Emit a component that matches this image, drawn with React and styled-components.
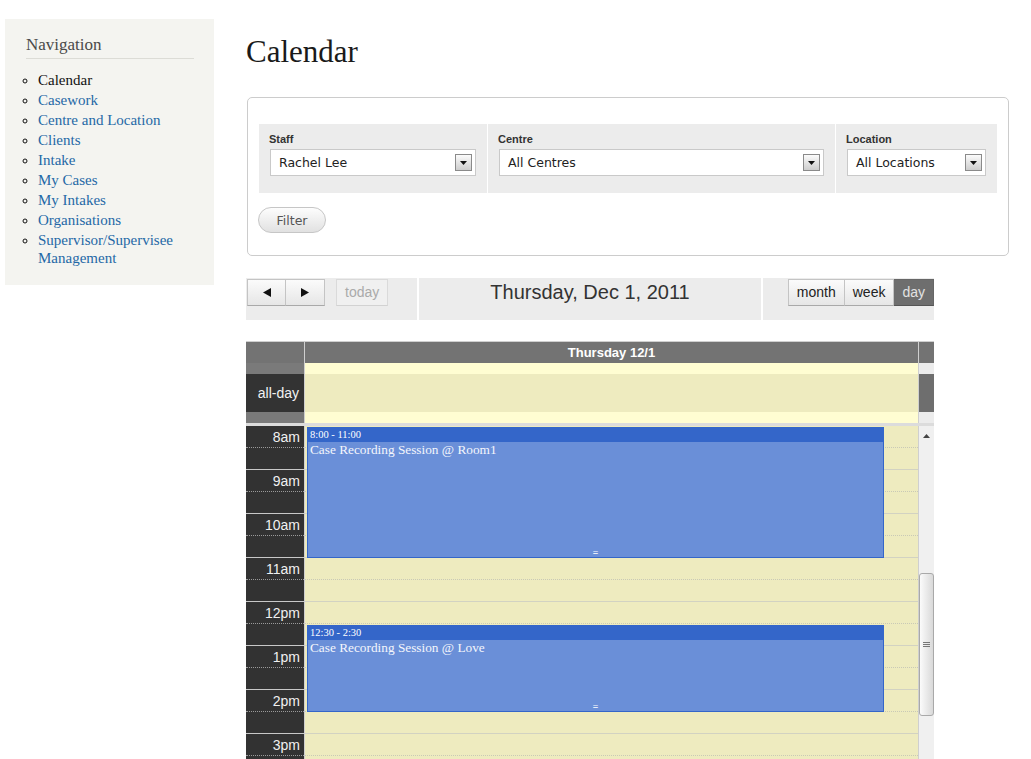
import React from 'react';
import styled, { createGlobalStyle } from 'styled-components';

const GlobalStyle = createGlobalStyle`
  html, body { margin: 0; padding: 0; background: #fff; overflow: hidden; }
  body { font-family: "Liberation Serif", "Times New Roman", serif; color: #222; }
  *, *::before, *::after { box-sizing: border-box; }
`;

const SANS = `"Liberation Sans", Arial, sans-serif`;
const UI = `"DejaVu Sans", Tahoma, sans-serif`;
const SERIF = `"Liberation Serif", "Times New Roman", serif`;

const Page = styled.div`
  display: flex;
  align-items: flex-start;
  padding: 19px 0 0 5px;
`;

/* ---------- Sidebar ---------- */
const Sidebar = styled.nav`
  width: 209px;
  flex: none;
  background: #f4f4f0;
  padding: 15px 20px 16px 21px;
`;
const NavHeading = styled.h2`
  margin: 0;
  font-family: ${SERIF};
  font-size: 17px;
  font-weight: normal;
  line-height: 22px;
  color: #4a4a4a;
  padding-bottom: 2px;
  border-bottom: 1px solid #dcdcd6;
`;
const NavList = styled.ul`
  margin: 12px 0 0;
  padding: 0 0 0 12px;
  list-style: circle;
`;
const NavItem = styled.li`
  font-size: 15px;
  line-height: 18px;
  margin-bottom: 2px;
  color: #111;
`;
const NavLink = styled.a`
  color: ${p => (p.$active ? '#111' : '#2468a6')};
  text-decoration: none;
`;

/* ---------- Main ---------- */
const Main = styled.main`
  margin-left: 32px;
  width: 763px;
  flex: none;
`;
const Title = styled.h1`
  margin: 15px 0 27px;
  font-family: ${SERIF};
  font-size: 31px;
  line-height: 36px;
  font-weight: normal;
  color: #1a1a1a;
`;

/* ---------- Filter ---------- */
const FilterBox = styled.form`
  margin-left: 1px;
  border: 1px solid #cccccc;
  border-radius: 5px;
  padding: 26px 11px 22px;
`;
const FilterRow = styled.div`
  display: flex;
  gap: 1px;
`;
const FilterCell = styled.div`
  width: ${p => p.$w}px;
  flex: none;
  background: #ececec;
  padding: 7px 11px 17px 10px;
`;
const FieldLabel = styled.label`
  display: block;
  font: bold 11px/16px ${SANS};
  color: #333;
  margin-bottom: 2px;
`;
const SelectBox = styled.div`
  margin-left: 1px;
  height: 27px;
  background: #fff;
  border: 1px solid #c9c9c9;
  display: flex;
  align-items: center;
  justify-content: space-between;
  padding: 0 3px 0 8px;
  font: 12.5px ${UI};
  color: #222;
`;
const SelectArrow = styled.span`
  width: 17px;
  height: 17px;
  border: 1px solid #8a8a8a;
  background: linear-gradient(#fbfbfb, #cdcdcd);
  display: flex;
  align-items: center;
  justify-content: center;
`;
const FilterButton = styled.button`
  display: block;
  margin: 14px 0 0 -1px;
  width: 68px;
  height: 26px;
  padding: 0;
  border: 1px solid #c6c6c6;
  border-radius: 13px;
  background: linear-gradient(#fdfdfd, #e1e1e1);
  font: 12.5px ${UI};
  color: #555;
`;

/* ---------- Toolbar ---------- */
const Toolbar = styled.div`
  margin-top: 22px;
  width: 688px;
  height: 42px;
  display: grid;
  grid-template-columns: 171px 1fr 171px;
  column-gap: 2px;
`;
const ToolSection = styled.div`
  background: #ececec;
  padding-top: 1px;
  display: flex;
  align-items: flex-start;
  justify-content: ${p => p.$align || 'flex-start'};
`;
const ButtonGroup = styled.div`
  display: flex;
  margin-left: ${p => p.$ml || 0}px;
`;
const ToolButton = styled.button`
  height: 27px;
  min-width: ${p => p.$w || 0}px;
  padding: 0 8px;
  margin: 0;
  border: 1px solid ${p => (p.$active ? '#666' : p.$disabled ? '#dadada' : '#c4c4c4')};
  border-bottom-color: ${p => (p.$active ? '#555' : p.$disabled ? '#d2d2d2' : '#a9a9a9')};
  & + & { border-left: none; }
  background: ${p =>
    p.$active ? '#6e6e6e' : p.$disabled ? '#f0f0f0' : 'linear-gradient(#fbfbfb, #e6e6e6)'};
  color: ${p => (p.$active ? '#e2e2e2' : p.$disabled ? '#aaa' : '#222')};
  font: 14px/25px ${SANS};
  display: flex;
  align-items: center;
  justify-content: center;
`;
const ToolTitle = styled.h2`
  margin: 0;
  width: 100%;
  text-align: center;
  font: 20px/27px ${SANS};
  font-weight: normal;
  color: #333;
`;

/* ---------- Calendar ---------- */
const Calendar = styled.div`
  margin-top: 21px;
  width: 688px;
  border-top: 1px solid #cfcfcf;
`;
const CalRow = styled.div`
  display: grid;
  grid-template-columns: 58px 613px 15px;
  column-gap: 1px;
  background: #cfcfcf;
  height: ${p => p.$h}px;
  overflow: hidden;
`;
const HeadCell = styled.div`
  background: #737373;
  color: #fff;
  font: bold 13px/21px ${SANS};
  text-align: center;
`;
const Bands = styled.div`
  display: grid;
  grid-template-rows: 11px 1fr 11px;
`;
const Band = styled.div`
  background: ${p => p.$bg};
  color: #f2f2f2;
  font: 14px ${SANS};
  display: flex;
  align-items: center;
  justify-content: flex-end;
  padding-right: 5px;
`;
const Divider = styled.div`
  height: 3px;
  background: #dcdcdc;
`;
const SlotColumn = styled.div`
  position: relative;
  background: ${p => p.$bg};
`;
const HalfSlot = styled.div`
  height: 22px;
  border-bottom: 1px ${p => (p.$half ? 'dotted' : 'solid')} ${p => p.$line};
  color: #f0f0f0;
  font: 14px/22px ${SANS};
  text-align: right;
  padding-right: 4px;
`;
const Event = styled.div`
  position: absolute;
  left: 2px;
  right: 34px;
  top: ${p => p.$top}px;
  height: ${p => p.$h}px;
  border: 1px solid #3466c9;
  background: #6a8fd8;
  color: #f4f6fc;
  overflow: hidden;
`;
const EventTime = styled.div`
  background: #3466c9;
  height: 14px;
  font: 10.5px/14px ${SERIF};
  color: #fff;
  padding-left: 2px;
`;
const EventTitle = styled.div`
  font: 13.3px/15px ${SERIF};
  padding: 0 2px;
`;
const Resizer = styled.div`
  position: absolute;
  bottom: 1px;
  left: 50%;
  transform: translateX(-50%);
  font: 9px/7px "DejaVu Sans Mono", monospace;
  color: #fff;
`;
const ScrollTrack = styled.div`
  background: #f0f0f0;
  display: flex;
  flex-direction: column;
  align-items: center;
`;
const ScrollArrow = styled.div`
  height: 20px;
  display: flex;
  align-items: center;
  justify-content: center;
`;
const ScrollThumb = styled.div`
  margin-top: ${p => p.$offset}px;
  width: 15px;
  height: ${p => p.$h}px;
  border: 1px solid #a9a9a9;
  border-radius: 3px;
  background: linear-gradient(to right, #fbfbfb, #d9d9d9);
  display: flex;
  align-items: center;
  justify-content: center;
`;

const navItems = [
  'Calendar',
  'Casework',
  'Centre and Location',
  'Clients',
  'Intake',
  'My Cases',
  'My Intakes',
  'Organisations',
  'Supervisor/Supervisee Management',
];

const hours = ['8am', '9am', '10am', '11am', '12pm', '1pm', '2pm', '3pm'];
const HOUR = 44;
const events = [
  { start: 8, end: 11, time: '8:00 - 11:00', title: 'Case Recording Session @ Room1' },
  { start: 12.5, end: 14.5, time: '12:30 - 2:30', title: 'Case Recording Session @ Love' },
];

const DownTri = () => (
  <svg width="7" height="4" viewBox="0 0 7 4"><polygon points="0,0 7,0 3.5,4" fill="#111" /></svg>
);
const LeftTri = () => (
  <svg width="8" height="9" viewBox="0 0 8 9"><polygon points="8,0 8,9 0,4.5" fill="#111" /></svg>
);
const RightTri = () => (
  <svg width="8" height="9" viewBox="0 0 8 9"><polygon points="0,0 0,9 8,4.5" fill="#111" /></svg>
);

function Select({ value }) {
  return (
    <SelectBox>
      <span>{value}</span>
      <SelectArrow><DownTri /></SelectArrow>
    </SelectBox>
  );
}

export default function App() {
  return (
    <>
      <GlobalStyle />
      <Page>
        <Sidebar>
          <NavHeading>Navigation</NavHeading>
          <NavList>
            {navItems.map((n, i) => (
              <NavItem key={n}>
                <NavLink href="#" $active={i === 0}>{n}</NavLink>
              </NavItem>
            ))}
          </NavList>
        </Sidebar>

        <Main>
          <Title>Calendar</Title>

          <FilterBox onSubmit={e => e.preventDefault()}>
            <FilterRow>
              <FilterCell $w={228}>
                <FieldLabel>Staff</FieldLabel>
                <Select value="Rachel Lee" />
              </FilterCell>
              <FilterCell $w={347}>
                <FieldLabel>Centre</FieldLabel>
                <Select value="All Centres" />
              </FilterCell>
              <FilterCell $w={161}>
                <FieldLabel>Location</FieldLabel>
                <Select value="All Locations" />
              </FilterCell>
            </FilterRow>
            <FilterButton type="submit">Filter</FilterButton>
          </FilterBox>

          <Toolbar>
            <ToolSection>
              <ButtonGroup $ml={1}>
                <ToolButton $w={39}><LeftTri /></ToolButton>
                <ToolButton $w={39}><RightTri /></ToolButton>
              </ButtonGroup>
              <ButtonGroup $ml={11}>
                <ToolButton $w={52} $disabled>today</ToolButton>
              </ButtonGroup>
            </ToolSection>
            <ToolSection>
              <ToolTitle>Thursday, Dec 1, 2011</ToolTitle>
            </ToolSection>
            <ToolSection $align="flex-end">
              <ButtonGroup>
                <ToolButton>month</ToolButton>
                <ToolButton>week</ToolButton>
                <ToolButton $active>day</ToolButton>
              </ButtonGroup>
            </ToolSection>
          </Toolbar>

          <Calendar>
            <CalRow $h={21}>
              <HeadCell />
              <HeadCell>Thursday 12/1</HeadCell>
              <HeadCell />
            </CalRow>
            <CalRow $h={60}>
              <Bands>
                <Band $bg="#7a7a7a" />
                <Band $bg="#333333">all-day</Band>
                <Band $bg="#7a7a7a" />
              </Bands>
              <Bands>
                <Band $bg="#fffdd2" />
                <Band $bg="#eeebbf" />
                <Band $bg="#fffdd2" />
              </Bands>
              <Bands>
                <Band $bg="#ececec" />
                <Band $bg="#6e6e6e" />
                <Band $bg="#ececec" />
              </Bands>
            </CalRow>
            <Divider />
            <CalRow $h={340}>
              <SlotColumn $bg="#323232">
                {hours.map(h => (
                  <React.Fragment key={h}>
                    <HalfSlot $half $line="#9a9a9a">{h}</HalfSlot>
                    <HalfSlot $line="#c8c8c8" />
                  </React.Fragment>
                ))}
              </SlotColumn>
              <SlotColumn $bg="#eeebbf">
                {hours.map(h => (
                  <React.Fragment key={h}>
                    <HalfSlot $half $line="#c9c9b6" />
                    <HalfSlot $line="#d2d2c2" />
                  </React.Fragment>
                ))}
                {events.map(ev => (
                  <Event
                    key={ev.time}
                    $top={(ev.start - 8) * HOUR + 1}
                    $h={(ev.end - ev.start) * HOUR - 1}
                  >
                    <EventTime>{ev.time}</EventTime>
                    <EventTitle>{ev.title}</EventTitle>
                    <Resizer>=</Resizer>
                  </Event>
                ))}
              </SlotColumn>
              <ScrollTrack>
                <ScrollArrow>
                  <svg width="7" height="4" viewBox="0 0 7 4"><polygon points="0,4 7,4 3.5,0" fill="#444" /></svg>
                </ScrollArrow>
                <ScrollThumb $offset={127} $h={143}>
                  <svg width="7" height="7" viewBox="0 0 7 7">
                    <path d="M0 1.5H7M0 3.5H7M0 5.5H7" stroke="#777" strokeWidth="1" />
                  </svg>
                </ScrollThumb>
              </ScrollTrack>
            </CalRow>
          </Calendar>
        </Main>
      </Page>
    </>
  );
}
